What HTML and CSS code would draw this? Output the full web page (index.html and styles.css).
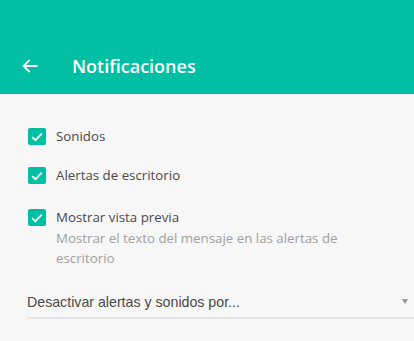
FILE: index.html
```html
<!DOCTYPE html>
<html lang="es">
<head>
<meta charset="utf-8">
<title>Notificaciones</title>
<link rel="stylesheet" href="styles.css">
</head>
<body>
<header class="header">
  <button class="back" aria-label="Atrás">
    <svg width="16" height="14" viewBox="0 0 16 14"><path d="M15.5 7H1.8M7.6 1L1.6 7l6 6" fill="none" stroke="#fff" stroke-width="1.8"/></svg>
  </button>
  <h1 class="title">Notificaciones</h1>
</header>
<main class="content">
  <div class="options">
    <label class="option">
      <span class="box"><svg width="12" height="10" viewBox="0 0 12 10"><path d="M1.2 5.2l3.2 3 6.4-6.6" fill="none" stroke="#fff" stroke-width="1.8"/></svg></span>
      <span class="text"><span class="label">Sonidos</span></span>
    </label>
    <label class="option">
      <span class="box"><svg width="12" height="10" viewBox="0 0 12 10"><path d="M1.2 5.2l3.2 3 6.4-6.6" fill="none" stroke="#fff" stroke-width="1.8"/></svg></span>
      <span class="text"><span class="label">Alertas de escritorio</span></span>
    </label>
    <label class="option option--detail">
      <span class="box"><svg width="12" height="10" viewBox="0 0 12 10"><path d="M1.2 5.2l3.2 3 6.4-6.6" fill="none" stroke="#fff" stroke-width="1.8"/></svg></span>
      <span class="text"><span class="label">Mostrar vista previa</span><span class="hint">Mostrar el texto del mensaje en las alertas de escritorio</span></span>
    </label>
  </div>
  <div class="select">
    <span class="select-text">Desactivar alertas y sonidos por...</span>
    <span class="caret"></span>
  </div>
</main>
</body>
</html>
```
FILE: styles.css
```css
html, body {
  margin: 0;
  padding: 0;
}
body {
  background: #f7f7f7;
  font-family: "Open Sans", "Noto Sans", sans-serif;
  height: 341px;
  overflow: hidden;
}
.header {
  background: #00bfa5;
  height: 94px;
  box-sizing: border-box;
  display: flex;
  align-items: center;
  padding: 38px 0 0 22px;
}
.back {
  background: none;
  border: 0;
  padding: 0;
  width: 16px;
  height: 14px;
  display: flex;
  margin-right: 34px;
}
.title {
  margin: 0;
  font-size: 18px;
  font-weight: 600;
  color: #fff;
  line-height: 24px;
}
.content {
  padding: 34px 0 0 28px;
}
.options {
  display: flex;
  flex-direction: column;
  gap: 22px;
}
.option {
  display: flex;
  align-items: flex-start;
}
.option--detail {
  margin-top: 3px;
}
.box {
  width: 18px;
  height: 17px;
  border-radius: 2px;
  background: #00bfa5;
  display: flex;
  align-items: center;
  justify-content: center;
  flex: none;
  margin-right: 10px;
}
.text {
  display: flex;
  flex-direction: column;
  padding-right: 60px;
}
.label {
  font-size: 13.3px;
  line-height: 17px;
  color: #4a4a4a;
}
.hint {
  font-size: 13.3px;
  line-height: 20px;
  margin-top: 2px;
  color: #a0a0a0;
}
.select {
  display: flex;
  align-items: center;
  justify-content: space-between;
  font-family: "Liberation Sans", Arial, sans-serif;
  font-size: 14.2px;
  color: #4a4a4a;
  border-bottom: 2px solid #e6e6e6;
  height: 31px;
  padding-right: 6px;
  margin-top: 18px;
  margin-left: -1px;
}
.caret {
  width: 0;
  height: 0;
  border-left: 3px solid transparent;
  border-right: 3px solid transparent;
  border-top: 5px solid #999;
}
```
